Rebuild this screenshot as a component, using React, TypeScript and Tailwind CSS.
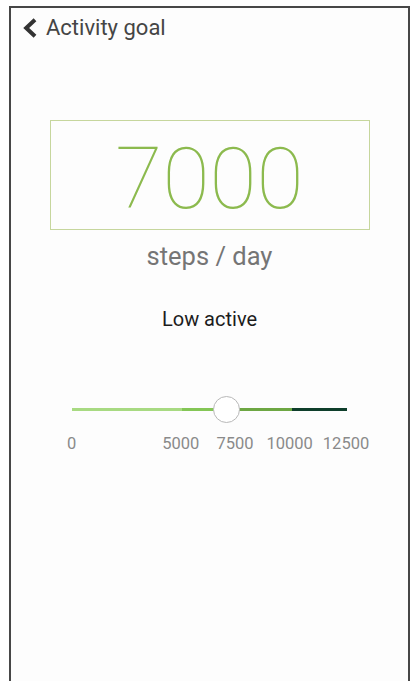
import React from "react";

export default function App() {
  const max = 12500;
  const value = 7000;
  const trackW = 275;
  const thumbLeft = (value / max) * trackW - 13.5;
  return (
    <div className="w-[410px] h-[681px] bg-white overflow-hidden pt-[6px] pl-[9px]" style={{ fontFamily: "Roboto, 'Noto Sans', sans-serif" }}>
      <div className="w-[401px] h-[700px] border-t-2 border-l-2 border-r-2 border-[#474747] bg-[#fdfdfd] flex flex-col">
        {/* Header */}
        <div className="h-[40px] flex items-center">
          <svg className="ml-[12px]" width="14" height="20" viewBox="0 0 14 20">
            <polyline points="12,1.8 3.2,10 12,18.2" fill="none" stroke="#333333" strokeWidth="4" strokeLinejoin="miter" />
          </svg>
          <span className="ml-[9px] text-[22px] leading-[26px] text-[#454545]">Activity goal</span>
        </div>

        {/* Goal box */}
        <div className="mt-[72px] mx-auto w-[320px] h-[110px] border border-[#c6d69d] flex items-center justify-center pt-[8px]">
          <span className="text-[86px] leading-[86px] font-thin text-[#8cba4e]">7000</span>
        </div>

        <div className="mt-[11px] text-center text-[25.5px] leading-[30px] text-[#757575]">steps / day</div>

        <div className="mt-[36px] text-center text-[20px] leading-[24px] text-[#1c1c1c]">Low active</div>

        {/* Slider */}
        <div className="mt-[65px] mx-auto w-[275px] h-[27px] relative flex items-center">
          <div className="flex w-full h-[3px]">
            <div className="w-[110px] h-full bg-[#a8da82]" />
            <div className="w-[55px] h-full bg-[#84c656]" />
            <div className="w-[55px] h-full bg-[#6da743]" />
            <div className="w-[55px] h-full bg-[#0e3e2b]" />
          </div>
          <div
            className="absolute top-0 w-[27px] h-[27px] rounded-full bg-white border border-[#b8b8b8]"
            style={{ left: thumbLeft }}
          />
        </div>

        <div className="mt-[11px] flex pl-[56px] text-[16.5px] leading-[20px] text-[#8a8a8a]">
          <span>0</span>
          <span className="ml-[86px]">5000</span>
          <span className="ml-[17px]">7500</span>
          <span className="ml-[13px]">10000</span>
          <span className="ml-[10px]">12500</span>
        </div>
      </div>
    </div>
  );
}
